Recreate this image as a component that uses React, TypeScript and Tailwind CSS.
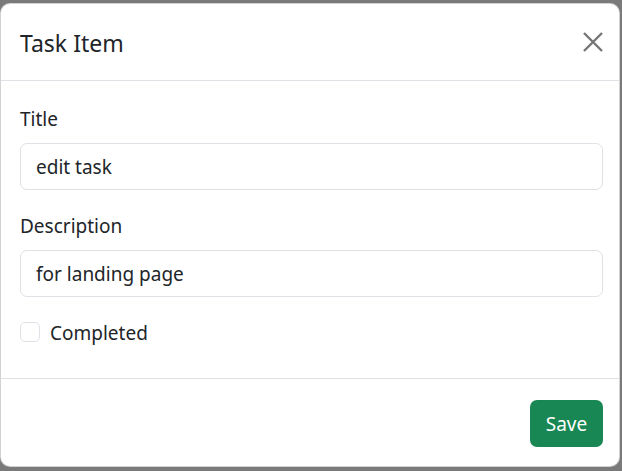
import React from "react";

export default function App() {
  return (
    <div
      className="w-[622px] h-[471px] bg-[#7a7a7a] pt-[3px] pr-[2px] overflow-hidden"
      style={{ fontFamily: '"Noto Sans", "Open Sans", sans-serif' }}
    >
      <div className="w-[620px] h-[464px] bg-white rounded-[10px] border border-black/[.175] flex flex-col text-[#212529]">
        <div className="h-[77px] shrink-0 flex items-center justify-between pl-[19px] pr-[16px] border-b border-[#dee2e6]">
          <h5 className="text-[23px] leading-[36px] font-normal pt-[2px]">Task Item</h5>
          <button className="w-[20px] h-[20px] flex items-center justify-center">
            <svg width="20" height="20" viewBox="0 0 20 20">
              <path d="M1 1 L19 19 M19 1 L1 19" stroke="#767676" strokeWidth="2.4" fill="none" />
            </svg>
          </button>
        </div>
        <div className="h-[297px] shrink-0 pl-[19px] pr-[16px] pt-[22px] flex flex-col">
          <label className="h-[30px] leading-[30px] text-[19px] pt-[1px]">Title</label>
          <div className="mt-[10px] h-[47px] border border-[#dee2e6] rounded-[7px] px-[15px] pt-[2px] flex items-center text-[19px]">
            edit task
          </div>
          <label className="mt-[20px] h-[30px] leading-[30px] text-[19px] pt-[1px]">Description</label>
          <div className="mt-[10px] h-[47px] border border-[#dee2e6] rounded-[7px] px-[15px] pt-[2px] flex items-center text-[19px]">
            for landing page
          </div>
          <div className="mt-[20px] h-[30px] flex items-center">
            <span className="w-[20px] h-[20px] border border-[#dee2e6] rounded-[5px] shrink-0" />
            <span className="ml-[10px] text-[19px] leading-[30px] pt-[2px]">Completed</span>
          </div>
        </div>
        <div className="flex-1 border-t border-[#dee2e6] flex items-center justify-end pr-[16px]">
          <button className="w-[73px] h-[47px] pt-[2px] flex items-center justify-center bg-[#198754] text-white rounded-[7px] text-[19px] mt-[1px]">
            Save
          </button>
        </div>
      </div>
    </div>
  );
}
